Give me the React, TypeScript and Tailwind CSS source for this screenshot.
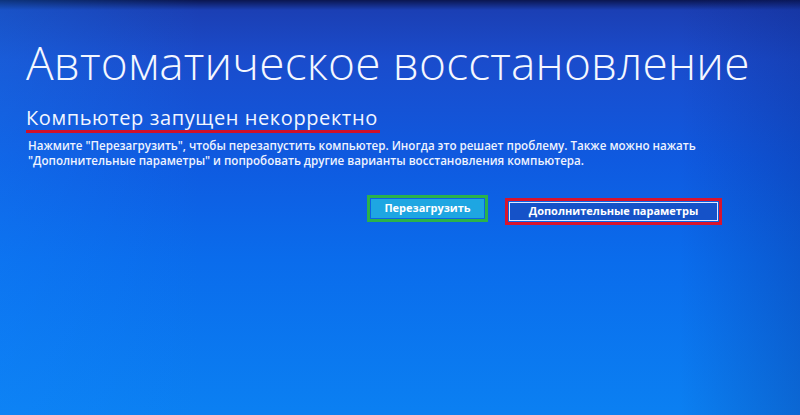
export default function App() {
  return (
    <div
      className="relative h-[415px] w-[800px] overflow-hidden bg-[linear-gradient(180deg,#0b1650_0px,#1b3fb4_10px,#1a4ccc_60px,#0f5ae0_160px,#0a6cec_260px,#0b80f2_415px)] text-white"
      style={{ fontFamily: '"Open Sans", "Noto Sans", sans-serif' }}
    >
      <div className="pointer-events-none absolute inset-0 bg-[linear-gradient(90deg,rgba(20,140,255,0.25)_0%,rgba(0,0,0,0)_25%,rgba(0,0,0,0)_85%,rgba(10,30,120,0.25)_100%)]" />
      <div className="relative flex flex-col pl-[26px] pt-[34px]">
        <h1 className="text-[46px] font-light leading-[56px] tracking-[0.2px] text-[#f4f7ff]">
          Автоматическое восстановление
        </h1>
        <div className="mt-[17px] w-fit border-b-[3px] border-[#d0102a] pb-[1px] pr-[2px]">
          <h2 className="text-[20px] font-normal leading-[22px] tracking-[0.6px] text-[#f2f6ff]">
            Компьютер запущен некорректно
          </h2>
        </div>
        <div className="mt-[5px] pl-[2px] text-[11.6px] font-semibold leading-[15px] text-[#eef3ff]">
          <p>Нажмите "Перезагрузить", чтобы перезапустить компьютер. Иногда это решает проблему. Также можно нажать</p>
          <p>"Дополнительные параметры" и попробовать другие варианты восстановления компьютера.</p>
        </div>
        <div className="mt-[27px] flex items-start gap-[17px] pl-[341px]">
          <div className="border-[3px] border-[#2bb24a] p-[1px]">
            <div className="flex h-[19px] w-[113px] items-center justify-center bg-[#1ea6e2] text-[11px] font-bold text-white">
              Перезагрузить
            </div>
          </div>
          <div className="mt-[3px] border-[3px] border-[#d8142e] p-[1px]">
            <div className="flex h-[19px] w-[209px] items-center justify-center border border-[#dfe8ff] bg-[#1552c8] text-[11px] font-bold text-white">
              Дополнительные параметры
            </div>
          </div>
        </div>
      </div>
    </div>
  );
}
